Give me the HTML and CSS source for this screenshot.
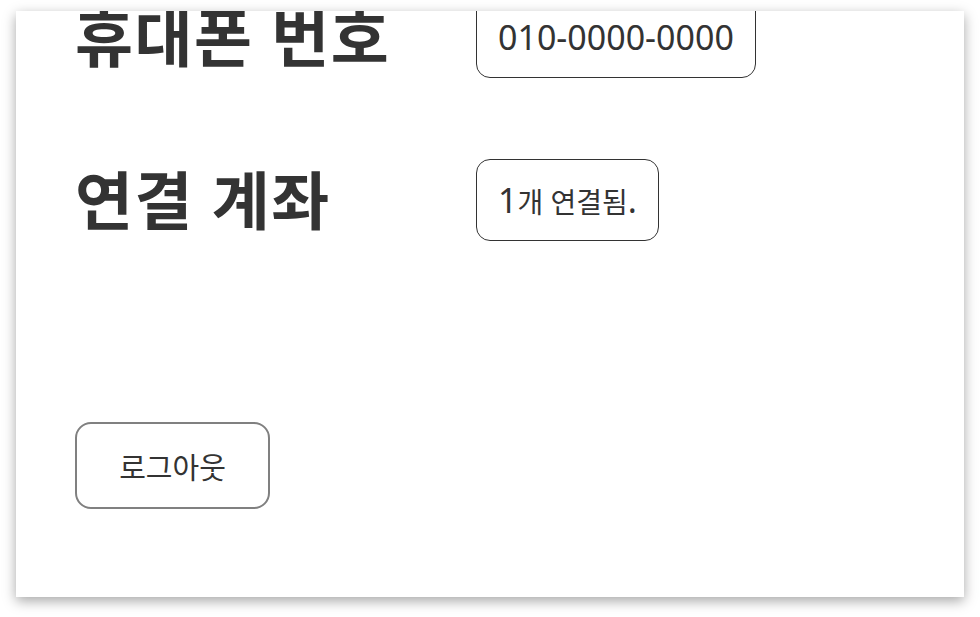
FILE: index.html
```html
<!DOCTYPE html>
<html lang="ko">
<head>
  <meta charset="utf-8">
  <meta name="viewport" content="width=device-width, initial-scale=1.0">
  <title>내 정보</title>
  <link rel="stylesheet" href="styles.css">
</head>
<body>
  <div class="card">
    <div class="info">
      <h2 class="label">휴대폰 번호</h2>
      <div class="value"><span class="badge">010-0000-0000</span></div>
      <h2 class="label">연결 계좌</h2>
      <div class="value"><span class="badge">1<span class="ko">개 연결됨</span>.</span></div>
    </div>
    <button class="logout" type="button">로그아웃</button>
  </div>
</body>
</html>
```

FILE: styles.css
```css
* {
    box-sizing: border-box;
}
html, body {
    margin: 0;
    background: #fff;
}
body {
    padding: 11px 16px 20px 16px;
    font-family: "Noto Sans", "Noto Sans CJK KR", sans-serif;
    color: #333;
}

.card {
    height: 586px;
    overflow: hidden;
    background: #fff;
    padding: 0 59px;
    box-shadow: 0 4px 12px rgba(0, 0, 0, 0.35);
}

.info {
    margin-top: -15px;
    display: grid;
    grid-template-columns: 401px auto;
    row-gap: 81px;
    align-items: center;
}

.label {
    margin: 0;
    font-size: 63px;
    font-weight: 700;
    letter-spacing: 1.5px;
    line-height: 82px;
    white-space: nowrap;
}

.value {
    display: flex;
}

.badge {
    display: inline-block;
    height: 82px;
    line-height: 80px;
    padding: 0 21px;
    border: 1px solid #333;
    border-radius: 14px;
    font-size: 34px;
    color: #333;
    white-space: nowrap;
}

.ko {
    font-size: 28px;
}

.logout {
    display: block;
    margin-top: 181px;
    width: 195px;
    height: 87px;
    border: 2px solid #808080;
    border-radius: 16px;
    background: #fff;
    font-family: inherit;
    font-size: 29px;
    color: #333;
    cursor: pointer;
}
```
